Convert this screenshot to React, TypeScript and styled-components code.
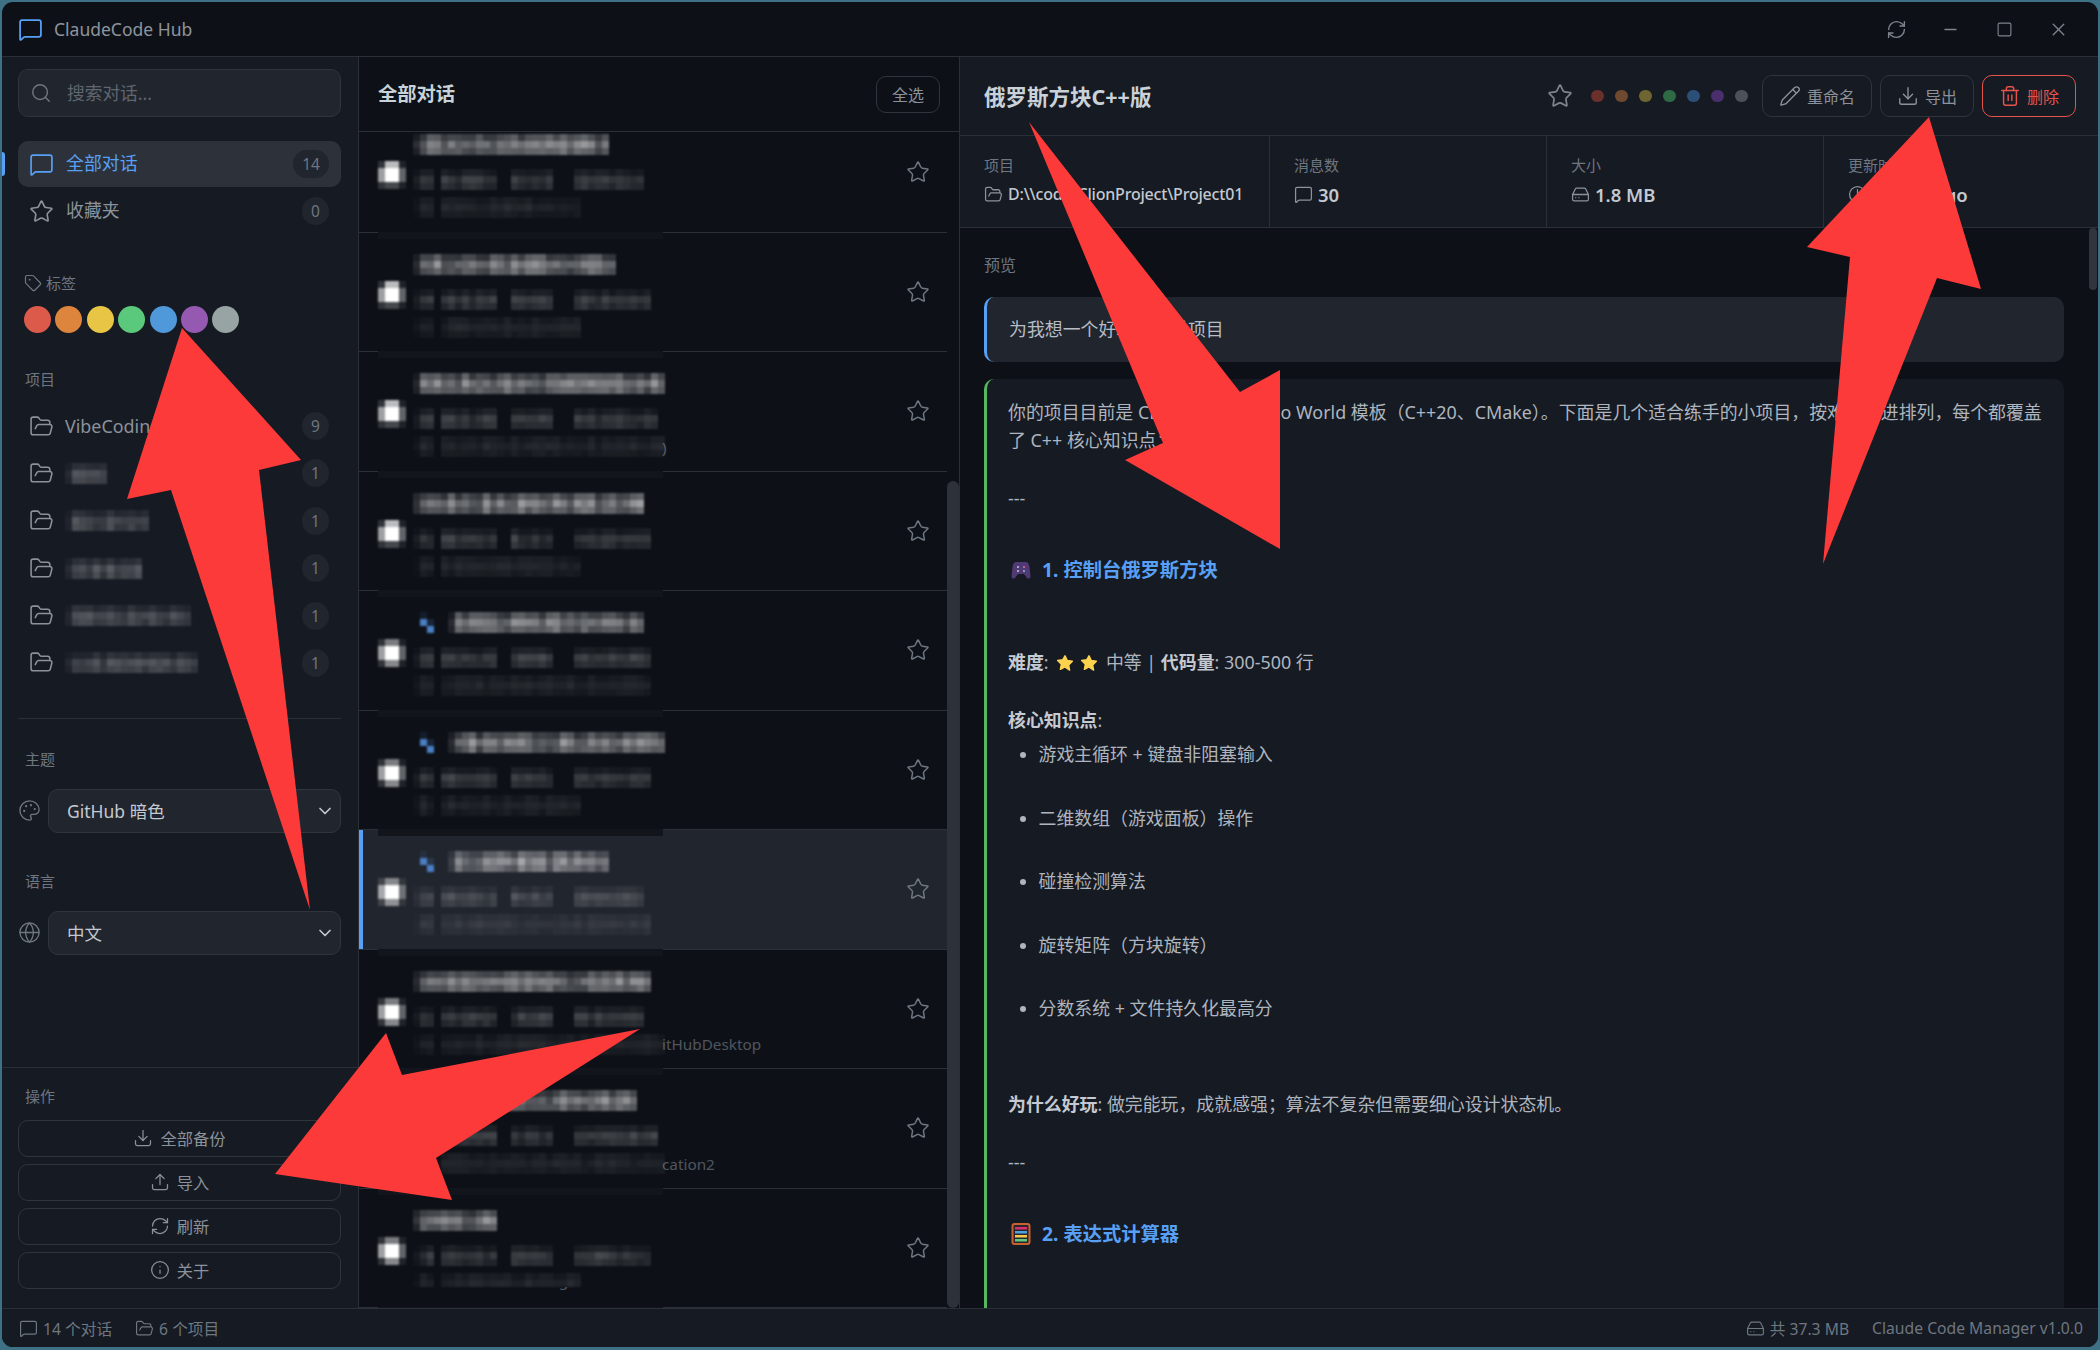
import React from "react";
import styled, { createGlobalStyle } from "styled-components";
import {
  ChevronDown,
  Clock,
  Download,
  FolderOpen,
  Globe,
  HardDrive,
  Info,
  MessageSquare,
  Minus,
  Palette,
  Pencil,
  RefreshCw,
  Search,
  Square,
  Star,
  Tag,
  Trash2,
  Upload,
  X,
} from "lucide-react";

const GlobalStyle = createGlobalStyle`
  html, body { margin: 0; padding: 0; }
  body {
    background: #3e7185;
    font-family: "Noto Sans", "Noto Sans CJK SC", sans-serif;
    overflow: hidden;
  }
  * { box-sizing: border-box; }
`;

const Desktop = styled.div`
  position: relative;
  width: 2100px;
  height: 1350px;
  padding: 2px 2px 3px 2px;
`;

const Window = styled.div`
  height: 100%;
  display: flex;
  flex-direction: column;
  border-radius: 11px;
  overflow: hidden;
  background: #0d1117;
`;

const TitleBar = styled.header`
  height: 55px;
  flex: none;
  display: flex;
  align-items: center;
  padding: 0 13px 0 16px;
  border-bottom: 1px solid #2b2f36;
  color: #8b929b;
`;

const AppName = styled.span`
  margin-left: 11px;
  font-size: 17.5px;
  color: #8d949d;
`;

const WindowControls = styled.div`
  margin-left: auto;
  display: flex;
`;

const WindowButton = styled.div`
  width: 54px;
  display: flex;
  justify-content: center;
  align-items: center;
  color: #7d848d;
`;

const Main = styled.div`
  flex: 1;
  min-height: 0;
  display: flex;
`;

const Sidebar = styled.aside`
  width: 357px;
  flex: none;
  display: flex;
  flex-direction: column;
  background: #161a22;
  border-right: 1px solid #2b2f36;
`;

const SidebarTop = styled.div`
  padding: 12px 17px 0 16px;
`;

const SearchBox = styled.div`
  height: 48px;
  display: flex;
  align-items: center;
  gap: 13px;
  padding: 0 11px;
  background: #21252d;
  border: 1px solid #30343c;
  border-radius: 10px;
  color: #6e7681;
`;

const SearchInput = styled.input`
  flex: 1;
  min-width: 0;
  background: none;
  border: 0;
  outline: 0;
  font: inherit;
  font-size: 17.7px;
  &::placeholder { color: #5f666f; opacity: 1; }
`;

const NavList = styled.nav`
  margin-top: 24px;
  display: flex;
  flex-direction: column;
  gap: 1px;
`;

const NavItem = styled.div<{ $active?: boolean }>`
  position: relative;
  height: 46px;
  display: flex;
  align-items: center;
  gap: 12px;
  padding: 0 12px 0 11px;
  border-radius: 10px;
  font-size: 17.9px;
  line-height: 24px;
  background: ${(p) => (p.$active ? "#2d3139" : "transparent")};
  color: ${(p) => (p.$active ? "#58a0f5" : "#8b929b")};
`;

const NavText = styled.span`
  margin-top: -2px;
`;

const NavMarker = styled.span`
  position: absolute;
  left: -16px;
  top: 11px;
  width: 3px;
  height: 24px;
  border-radius: 0 3px 3px 0;
  background: #58a0f5;
`;

const Badge = styled.span<{ $wide?: boolean }>`
  margin-left: auto;
  min-width: ${(p) => (p.$wide ? "36px" : "27px")};
  height: 28px;
  display: flex;
  align-items: center;
  justify-content: center;
  border-radius: 14px;
  background: #21252d;
  color: #6e7681;
  font-size: 15.5px;
`;

const TagHeading = styled.div`
  margin-top: 39px;
  padding-left: 6px;
  height: 20px;
  line-height: 18px;
  display: flex;
  align-items: center;
  gap: 4px;
  font-size: 15px;
  color: #6e7681;
`;

const SectionLabel = styled.div<{ $top: number }>`
  margin-top: ${(p) => p.$top}px;
  padding-left: 7px;
  height: 20px;
  line-height: 18px;
  font-size: 15px;
  color: #6e7681;
`;

const TagDots = styled.div`
  margin-top: 13px;
  padding-left: 6px;
  display: flex;
  gap: 4.4px;
`;

const TagDot = styled.span<{ $color: string }>`
  width: 27px;
  height: 27px;
  border-radius: 50%;
  background: ${(p) => p.$color};
`;

const ProjectList = styled.div`
  margin-top: 13px;
  display: flex;
  flex-direction: column;
  gap: 1.4px;
`;

const ProjectItem = styled.div`
  height: 46px;
  display: flex;
  align-items: center;
  gap: 11px;
  padding: 0 12px 0 11px;
  font-size: 17.9px;
  color: #8b929b;
`;

const Divider = styled.div`
  margin-top: 32px;
  height: 1px;
  background: #2b2f36;
`;

const SelectRow = styled.div`
  margin-top: 19px;
  display: flex;
  align-items: center;
  gap: 7px;
  color: #6e7681;
`;

const SelectBox = styled.div`
  flex: 1;
  height: 44px;
  display: flex;
  align-items: center;
  justify-content: space-between;
  padding: 0 5px 0 18px;
  background: #21252d;
  border: 1px solid #30343c;
  border-radius: 10px;
  font-size: 17.5px;
  color: #c3c9d1;
`;

const SidebarFooter = styled.div`
  margin-top: auto;
  padding: 19px 17px 19px 16px;
  border-top: 1px solid #2b2f36;
`;

const ActionList = styled.div`
  margin-top: 13px;
  display: flex;
  flex-direction: column;
  gap: 6.5px;
`;

const ActionButton = styled.div`
  height: 37.5px;
  display: flex;
  align-items: center;
  justify-content: center;
  gap: 7px;
  border: 1px solid #30343c;
  border-radius: 10px;
  font-size: 16.3px;
  color: #8b929b;
`;

const ListPane = styled.section`
  width: 600px;
  flex: none;
  display: flex;
  flex-direction: column;
  background: #0d1117;
`;

const ListHeader = styled.div`
  height: 75px;
  flex: none;
  display: flex;
  align-items: center;
  justify-content: space-between;
  padding: 0 19px 0 19px;
  border-bottom: 1px solid #2b2f36;
`;

const ListTitle = styled.h2`
  margin: 0 0 2px 0;
  font-size: 19.3px;
  font-weight: 700;
  color: #c9d1d9;
`;

const SelectAll = styled.div`
  width: 64px;
  height: 37px;
  display: flex;
  align-items: center;
  justify-content: center;
  border: 1px solid #30343c;
  border-radius: 10px;
  font-size: 16px;
  color: #8b929b;
`;

const ListScroll = styled.div`
  position: relative;
  flex: 1;
  min-height: 0;
  overflow: hidden;
`;

const ListRows = styled.div`
  margin-top: -19px;
  margin-right: 12px;
`;

const ScrollThumb = styled.div`
  position: absolute;
  right: 0;
  top: 349px;
  bottom: 0;
  width: 12px;
  border-radius: 6px;
  background: #2d3139;
`;

const Row = styled.div<{ $active?: boolean }>`
  position: relative;
  height: 119.5px;
  display: flex;
  align-items: flex-start;
  padding: 0 17px 0 19px;
  border-bottom: 1px solid #2b2f36;
  background: ${(p) => (p.$active ? "#21252d" : "transparent")};
  &::before {
    content: "";
    position: absolute;
    left: 19px;
    bottom: -7px;
    width: 285px;
    height: 7px;
    background: #12161c;
    z-index: 1;
  }
`;

const RowMarker = styled.span`
  position: absolute;
  left: 0;
  top: 0;
  bottom: 0;
  width: 4px;
  background: #58a0f5;
`;

const CheckCell = styled.div`
  margin-top: 48px;
  width: 35px;
  flex: none;
`;

const RowBody = styled.div`
  padding-top: 21px;
  display: flex;
  flex-direction: column;
  width: 250px;
`;

const BodyLine = styled.div<{ $gap: number; $cover?: boolean }>`
  position: ${(p) => (p.$cover ? "relative" : "static")};
  z-index: ${(p) => (p.$cover ? 1 : "auto")};
  margin-top: ${(p) => p.$gap}px;
  display: flex;
  align-items: center;
  white-space: nowrap;
  background: ${(p) => (p.$cover ? "#0d1117" : "transparent")};
`;

const PathTail = styled.span`
  margin-left: -3px;
  font-size: 15.3px;
  color: #50565f;
`;

const PathPeek = styled.div`
  margin-top: -17px;
  padding-left: 6px;
  font-size: 15.3px;
  line-height: 20px;
  color: #50565f;
  white-space: nowrap;
`;

const RowStar = styled.div`
  margin: 47px 0 0 auto;
  color: #6e7681;
  display: flex;
`;

const MosaicSvg = styled.svg`
  display: block;
  flex: none;
  overflow: visible;
  filter: blur(0.9px);
`;

const DetailPane = styled.section`
  flex: 1;
  min-width: 0;
  display: flex;
  flex-direction: column;
  border-left: 1px solid #2b2f36;
  background: #0d1117;
`;

const DetailHeader = styled.div`
  height: 79px;
  flex: none;
  display: flex;
  align-items: center;
  padding: 0 22px 0 24px;
  background: #161a22;
  border-bottom: 1px solid #2b2f36;
`;

const DetailTitle = styled.h1`
  margin: 0 0 2px 0;
  font-size: 21.5px;
  font-weight: 700;
  color: #c9d1d9;
`;

const HeaderActions = styled.div`
  margin-left: auto;
  display: flex;
  align-items: center;
  color: #7d848d;
`;

const HeaderDots = styled.div`
  margin: 0 14px 0 18px;
  display: flex;
  gap: 11.5px;
`;

const HeaderDot = styled.span<{ $color: string }>`
  width: 12.5px;
  height: 12.5px;
  border-radius: 50%;
  background: ${(p) => p.$color};
`;

const HeaderButtons = styled.div`
  display: flex;
  gap: 8px;
`;

const HeaderButton = styled.div<{ $danger?: boolean }>`
  height: 42px;
  display: flex;
  align-items: center;
  gap: 6px;
  padding: 0 16px 1px 16px;
  border: 1px solid ${(p) => (p.$danger ? "#e5534b" : "#30343c")};
  border-radius: 10px;
  font-size: 16px;
  color: ${(p) => (p.$danger ? "#e5534b" : "#8b929b")};
`;

const StatsGrid = styled.div`
  height: 92px;
  flex: none;
  display: grid;
  grid-template-columns: 310px 277px 277px 1fr;
  background: #161a22;
  border-bottom: 1px solid #2b2f36;
`;

const StatCell = styled.div`
  padding: 19px 20px 0 24px;
  border-right: 1px solid #2b2f36;
  &:last-child { border-right: 0; }
`;

const StatLabel = styled.div`
  height: 20px;
  line-height: 20px;
  font-size: 15px;
  color: #6e7681;
`;

const StatValue = styled.div<{ $small?: boolean }>`
  margin-top: 7px;
  height: 24px;
  display: flex;
  align-items: center;
  gap: 5px;
  font-size: ${(p) => (p.$small ? "16px" : "18.5px")};
  font-weight: ${(p) => (p.$small ? 500 : 600)};
  color: #c3c9d1;
  white-space: nowrap;
  letter-spacing: ${(p) => (p.$small ? "-0.2px" : "0")};
  & svg { color: #8b929b; flex: none; }
`;

const DetailBody = styled.div`
  position: relative;
  flex: 1;
  min-height: 0;
  overflow: hidden;
  padding: 26px 34px 0 24px;
`;

const DetailScrollThumb = styled.div`
  position: absolute;
  top: 0;
  right: 1px;
  width: 8px;
  height: 62px;
  border-radius: 4px;
  background: #30343c;
`;

const PreviewLabel = styled.div`
  height: 22px;
  line-height: 22px;
  font-size: 16px;
  color: #6e7681;
`;

const UserBubble = styled.div`
  margin-top: 21px;
  height: 65px;
  display: flex;
  align-items: center;
  padding: 0 0 3px 22px;
  background: #21252d;
  border-left: 3.5px solid #58a0f5;
  border-radius: 10px;
  font-size: 17.9px;
  color: #b7bdc6;
`;

const AssistantBubble = styled.div`
  margin-top: 17px;
  padding: 19px 20px 0 21px;
  background: #161a22;
  border-left: 3.5px solid #57b65f;
  border-radius: 10px 10px 0 0;
  height: 1000px;
  font-size: 17.9px;
  line-height: 28px;
  color: #aeb5bf;
`;

const Para = styled.div<{ $top?: number }>`
  margin-top: ${(p) => p.$top ?? 0}px;
`;

const TextBlock = styled.div<{ $top?: number }>`
  margin-top: ${(p) => p.$top ?? 0}px;
  & b { font-weight: 700; color: #c5cad2; }
  & svg { vertical-align: -3px; margin: 0 3px; }
`;

const SectionHeading = styled.h3<{ $top: number }>`
  margin: ${(p) => p.$top}px 0 0 0;
  height: 32px;
  padding-left: 3px;
  display: flex;
  align-items: center;
  gap: 11px;
  font-size: 19.3px;
  font-weight: 700;
  color: #58a0f5;
`;

const Bullets = styled.ul`
  margin: 6px 0 0 0;
  padding: 0 0 0 30.5px;
`;

const Bullet = styled.li`
  margin-bottom: 35.6px;
  &::marker { color: #aeb5bf; }
`;

const StatusBar = styled.footer`
  height: 39px;
  flex: none;
  display: flex;
  align-items: center;
  gap: 23px;
  padding: 0 15px 0 17px;
  background: #161a22;
  border-top: 1px solid #2b2f36;
  font-size: 15.7px;
  color: #6e7681;
`;

const StatusItem = styled.span<{ $right?: boolean }>`
  display: flex;
  align-items: center;
  gap: 5px;
  margin-left: ${(p) => (p.$right ? "auto" : "0")};
`;

const ArrowLayer = styled.svg`
  position: absolute;
  left: 0;
  top: 0;
  z-index: 5;
  width: 2100px;
  height: 1350px;
  pointer-events: none;
`;

// the pixelated parts of the shot, same cell size as the original mosaic
const CELL = 7;

function noise(seed: number, i: number) {
  const v = Math.sin(seed * 127.1 + i * 311.7) * 43758.5453;
  return v - Math.floor(v);
}

type MosaicProps = {
  from?: number;
  cols: number;
  seed: number;
  level: number;
  weights: number[];
  gaps?: number[];
  blue?: boolean;
};

function Mosaic({ from = 0, cols, seed, level, weights, gaps = [], blue }: MosaicProps) {
  const cells: React.ReactElement[] = [];
  weights.forEach((w, r) => {
    for (let c = from; c < cols; c++) {
      if (gaps.includes(c)) continue;
      const edge = c === from ? 0.3 : 1;
      const n = 0.6 * noise(seed, c) + 0.4 * noise(seed + r * 3, c);
      const o = level * w * edge * (0.45 + 0.75 * n);
      cells.push(
        <rect key={`${r}-${c}`} x={c * CELL} y={r * CELL} width={CELL} height={CELL} fill="#fff" opacity={o} />
      );
    }
  });
  return (
    <MosaicSvg width={cols * CELL} height={weights.length * CELL}>
      {blue && (
        <>
          <rect x={CELL} y={CELL} width={CELL} height={CELL} fill="#4a7fc4" />
          <rect x={2 * CELL} y={2 * CELL} width={CELL} height={CELL} fill="#4a7fc4" />
          <rect x={CELL} y={0} width={CELL} height={CELL} fill="#4a7fc4" opacity={0.12} />
          <rect x={2 * CELL} y={CELL} width={CELL} height={CELL} fill="#4a7fc4" opacity={0.2} />
        </>
      )}
      {cells}
    </MosaicSvg>
  );
}

function CheckMosaic({ top }: { top: number }) {
  const grid = [
    [0.15, top, top, 0.08],
    [0.6, 1, 1, 0.35],
    [0.6, 1, 1, 0.35],
    [0.15, 0.95 - top, 0.95 - top, 0.08],
  ];
  return (
    <MosaicSvg width={28} height={28}>
      {grid.map((line, r) =>
        line.map((o, c) => (
          <rect key={`${r}-${c}`} x={c * CELL} y={r * CELL} width={CELL} height={CELL} fill="#fff" opacity={o} />
        ))
      )}
    </MosaicSvg>
  );
}

type RowData = {
  title: number;
  meta: number;
  path: number;
  emoji?: boolean;
  tail?: string;
  peek?: string;
  active?: boolean;
};

const rows: RowData[] = [
  { title: 28, meta: 33, path: 24 },
  { title: 29, meta: 34, path: 24 },
  { title: 36, meta: 35, path: 36, tail: ")" },
  { title: 33, meta: 34, path: 24 },
  { title: 33, meta: 34, path: 34, emoji: true },
  { title: 36, meta: 34, path: 24, emoji: true },
  { title: 28, meta: 33, path: 34, emoji: true, active: true },
  { title: 34, meta: 33, path: 36, tail: "itHubDesktop" },
  { title: 32, meta: 35, path: 36, tail: "cation2" },
  { title: 12, meta: 34, path: 24, peek: "D:\\\\code\\VibeCoding" },
];

const projectBlurs = [
  { cols: 6, seed: 3 },
  { cols: 12, seed: 7 },
  { cols: 11, seed: 11 },
  { cols: 18, seed: 13 },
  { cols: 19, seed: 17 },
];

const sideTags = ["#db5a4a", "#dd853c", "#e9c545", "#5bc97b", "#4f98d9", "#9659b2", "#98a3a4"];
const dimTags = ["#6b2f2c", "#6e4a2e", "#6f6530", "#2f6a45", "#2c4f78", "#4a2f6e", "#4d5158"];

const knowledge = [
  "游戏主循环 + 键盘非阻塞输入",
  "二维数组（游戏面板）操作",
  "碰撞检测算法",
  "旋转矩阵（方块旋转）",
  "分数系统 + 文件持久化最高分",
];

const arrows = [
  "182,328 301,460 259,470 310,910 171,490 127,499",
  "640,1029 402,1075 386,1033 275,1174 452,1200 436,1158",
  "1029,122 1240,392 1280,370 1280,549 1125,460 1163,443",
  "1929,117 1981,289 1937,278 1823,564 1850,257 1807,247",
];

function GamepadEmoji() {
  return (
    <svg width="20" height="22" viewBox="0 0 20 22">
      <path d="M5 3h10c2 0 3 2 3.500 5l1 9c.2 2-2 3.500-3.500 2l-3-4H7l-3 4c-1.500 1.500-3.700 0-3.500-2l1-9C2 5 3 3 5 3z" fill="#4f3a73" />
      <circle cx="7" cy="8" r="1" fill="#c9c4d6" />
      <circle cx="13" cy="8" r="1" fill="#e5719b" />
      <circle cx="7" cy="12" r="1" fill="#c9c4d6" />
      <circle cx="13" cy="12" r="1" fill="#8fb8e8" />
    </svg>
  );
}

function AbacusEmoji() {
  return (
    <svg width="20" height="22" viewBox="0 0 20 22">
      <rect x="1.500" y="1" width="17" height="20" rx="2" fill="#2b2430" stroke="#c8622f" strokeWidth="2" />
      <rect x="4" y="4" width="12" height="2.500" fill="#d6336c" />
      <rect x="4" y="8" width="12" height="2.500" fill="#4aa3df" />
      <rect x="4" y="12" width="12" height="2.500" fill="#f2c94c" />
      <rect x="4" y="16" width="12" height="2.500" fill="#5bc97b" />
    </svg>
  );
}

function StarEmoji() {
  return (
    <svg width="18" height="18" viewBox="0 0 24 24">
      <path
        d="M12 2.500l3 6.300 6.800.9-5 4.800 1.300 6.900L12 17.100l-6.100 3.300 1.300-6.900-5-4.800 6.800-.9z"
        fill="#fdd34e"
        stroke="#fdd34e"
        strokeWidth="2"
        strokeLinejoin="round"
      />
    </svg>
  );
}

export default function App() {
  return (
    <Desktop>
      <GlobalStyle />
      <Window>
        <TitleBar>
          <MessageSquare size={25} color="#58a0f5" strokeWidth={1.7} />
          <AppName>ClaudeCode Hub</AppName>
          <WindowControls>
            <WindowButton><RefreshCw size={21} strokeWidth={1.6} /></WindowButton>
            <WindowButton><Minus size={19} strokeWidth={1.6} /></WindowButton>
            <WindowButton><Square size={17} strokeWidth={1.6} /></WindowButton>
            <WindowButton><X size={21} strokeWidth={1.6} /></WindowButton>
          </WindowControls>
        </TitleBar>

        <Main>
          <Sidebar>
            <SidebarTop>
              <SearchBox>
                <Search size={22} strokeWidth={1.6} />
                <SearchInput placeholder="搜索对话..." />
              </SearchBox>

              <NavList>
                <NavItem $active>
                  <NavMarker />
                  <MessageSquare size={25} strokeWidth={1.6} />
                  <NavText>全部对话</NavText>
                  <Badge $wide>14</Badge>
                </NavItem>
                <NavItem>
                  <Star size={25} strokeWidth={1.6} />
                  <NavText>收藏夹</NavText>
                  <Badge>0</Badge>
                </NavItem>
              </NavList>

              <TagHeading>
                <Tag size={18} strokeWidth={1.6} />
                标签
              </TagHeading>
              <TagDots>
                {sideTags.map((c) => (
                  <TagDot key={c} $color={c} />
                ))}
              </TagDots>

              <SectionLabel $top={37}>项目</SectionLabel>
              <ProjectList>
                <ProjectItem>
                  <FolderOpen size={25} strokeWidth={1.5} />
                  VibeCoding
                  <Badge>9</Badge>
                </ProjectItem>
                {projectBlurs.map((b) => (
                  <ProjectItem key={b.seed}>
                    <FolderOpen size={25} strokeWidth={1.5} />
                    <Mosaic cols={b.cols} seed={b.seed} level={0.25} weights={[0.4, 1, 0.8]} />
                    <Badge>1</Badge>
                  </ProjectItem>
                ))}
              </ProjectList>

              <Divider />

              <SectionLabel $top={31}>主题</SectionLabel>
              <SelectRow>
                <Palette size={23} strokeWidth={1.4} />
                <SelectBox>
                  GitHub 暗色
                  <ChevronDown size={20} color="#c3c9d1" strokeWidth={2} />
                </SelectBox>
              </SelectRow>

              <SectionLabel $top={39}>语言</SectionLabel>
              <SelectRow>
                <Globe size={23} strokeWidth={1.4} />
                <SelectBox>
                  中文
                  <ChevronDown size={20} color="#c3c9d1" strokeWidth={2} />
                </SelectBox>
              </SelectRow>
            </SidebarTop>

            <SidebarFooter>
              <SectionLabel $top={0}>操作</SectionLabel>
              <ActionList>
                <ActionButton><Download size={20} strokeWidth={1.5} />全部备份</ActionButton>
                <ActionButton><Upload size={20} strokeWidth={1.5} />导入</ActionButton>
                <ActionButton><RefreshCw size={20} strokeWidth={1.5} />刷新</ActionButton>
                <ActionButton><Info size={20} strokeWidth={1.5} />关于</ActionButton>
              </ActionList>
            </SidebarFooter>
          </Sidebar>

          <ListPane>
            <ListHeader>
              <ListTitle>全部对话</ListTitle>
              <SelectAll>全选</SelectAll>
            </ListHeader>
            <ListScroll>
              <ListRows>
                {rows.map((r, i) => (
                  <Row key={i} $active={r.active}>
                    {r.active && <RowMarker />}
                    <CheckCell>
                      <CheckMosaic top={i < 4 ? 0.72 : 0.45} />
                    </CheckCell>
                    <RowBody>
                      <Mosaic
                        from={r.emoji ? 5 : 0}
                        cols={r.title}
                        seed={i + 21}
                        level={0.5}
                        weights={[0.6, 1, 0.75]}
                        blue={r.emoji}
                      />
                      <BodyLine $gap={14}>
                        <Mosaic
                          cols={r.meta}
                          seed={i + 41}
                          level={0.2}
                          weights={[0.35, 1, 0.7]}
                          gaps={[3, 12, 13, 20, 21, 22]}
                        />
                      </BodyLine>
                      <BodyLine $gap={7} $cover={!!r.peek}>
                        <Mosaic
                          cols={r.path}
                          seed={i + 61}
                          level={0.1}
                          weights={r.peek ? [0.6, 1] : [0.6, 1, 0.6]}
                          gaps={[3]}
                        />
                        {r.tail && <PathTail>{r.tail}</PathTail>}
                      </BodyLine>
                      {r.peek && <PathPeek>{r.peek}</PathPeek>}
                    </RowBody>
                    <RowStar>
                      <Star size={24} strokeWidth={1.5} />
                    </RowStar>
                  </Row>
                ))}
              </ListRows>
              <ScrollThumb />
            </ListScroll>
          </ListPane>

          <DetailPane>
            <DetailHeader>
              <DetailTitle>俄罗斯方块C++版</DetailTitle>
              <HeaderActions>
                <Star size={26} strokeWidth={1.6} />
                <HeaderDots>
                  {dimTags.map((c) => (
                    <HeaderDot key={c} $color={c} />
                  ))}
                </HeaderDots>
                <HeaderButtons>
                  <HeaderButton><Pencil size={22} strokeWidth={1.5} />重命名</HeaderButton>
                  <HeaderButton><Download size={22} strokeWidth={1.5} />导出</HeaderButton>
                  <HeaderButton $danger><Trash2 size={22} strokeWidth={1.6} />删除</HeaderButton>
                </HeaderButtons>
              </HeaderActions>
            </DetailHeader>

            <StatsGrid>
              <StatCell>
                <StatLabel>项目</StatLabel>
                <StatValue $small>
                  <FolderOpen size={19} strokeWidth={1.6} />
                  D:\\code\ClionProject\Project01
                </StatValue>
              </StatCell>
              <StatCell>
                <StatLabel>消息数</StatLabel>
                <StatValue>
                  <MessageSquare size={19} strokeWidth={1.6} />
                  30
                </StatValue>
              </StatCell>
              <StatCell>
                <StatLabel>大小</StatLabel>
                <StatValue>
                  <HardDrive size={19} strokeWidth={1.6} />
                  1.8 MB
                </StatValue>
              </StatCell>
              <StatCell>
                <StatLabel>更新时间</StatLabel>
                <StatValue>
                  <Clock size={19} strokeWidth={1.6} />
                  2 days ago
                </StatValue>
              </StatCell>
            </StatsGrid>

            <DetailBody>
              <DetailScrollThumb />
              <PreviewLabel>预览</PreviewLabel>
              <UserBubble>为我想一个好玩的练手项目</UserBubble>
              <AssistantBubble>
                <TextBlock>
                  你的项目目前是 CLion 默认的 Hello World 模板（C++20、CMake）。下面是几个适合练手的小项目，按难度递进排列，每个都覆盖了 C++ 核心知识点：
                </TextBlock>
                <Para $top={30}>---</Para>
                <SectionHeading $top={42}>
                  <GamepadEmoji />
                  1. 控制台俄罗斯方块
                </SectionHeading>
                <TextBlock $top={62}>
                  <b>难度</b>: <StarEmoji /><StarEmoji /> 中等 | <b>代码量</b>: 300-500 行
                </TextBlock>
                <TextBlock $top={30}>
                  <b>核心知识点</b>:
                </TextBlock>
                <Bullets>
                  {knowledge.map((k) => (
                    <Bullet key={k}>{k}</Bullet>
                  ))}
                </Bullets>
                <TextBlock $top={68}>
                  <b>为什么好玩</b>: 做完能玩，成就感强；算法不复杂但需要细心设计状态机。
                </TextBlock>
                <Para $top={30}>---</Para>
                <SectionHeading $top={42}>
                  <AbacusEmoji />
                  2. 表达式计算器
                </SectionHeading>
              </AssistantBubble>
            </DetailBody>
          </DetailPane>
        </Main>

        <StatusBar>
          <StatusItem><MessageSquare size={19} strokeWidth={1.5} />14 个对话</StatusItem>
          <StatusItem><FolderOpen size={19} strokeWidth={1.5} />6 个项目</StatusItem>
          <StatusItem $right><HardDrive size={19} strokeWidth={1.5} />共 37.3 MB</StatusItem>
          <StatusItem>Claude Code Manager v1.0.0</StatusItem>
        </StatusBar>
      </Window>

      <ArrowLayer viewBox="0 0 2100 1350">
        {arrows.map((pts) => (
          <polygon key={pts} points={pts} fill="#fd3a3a" />
        ))}
      </ArrowLayer>
    </Desktop>
  );
}
